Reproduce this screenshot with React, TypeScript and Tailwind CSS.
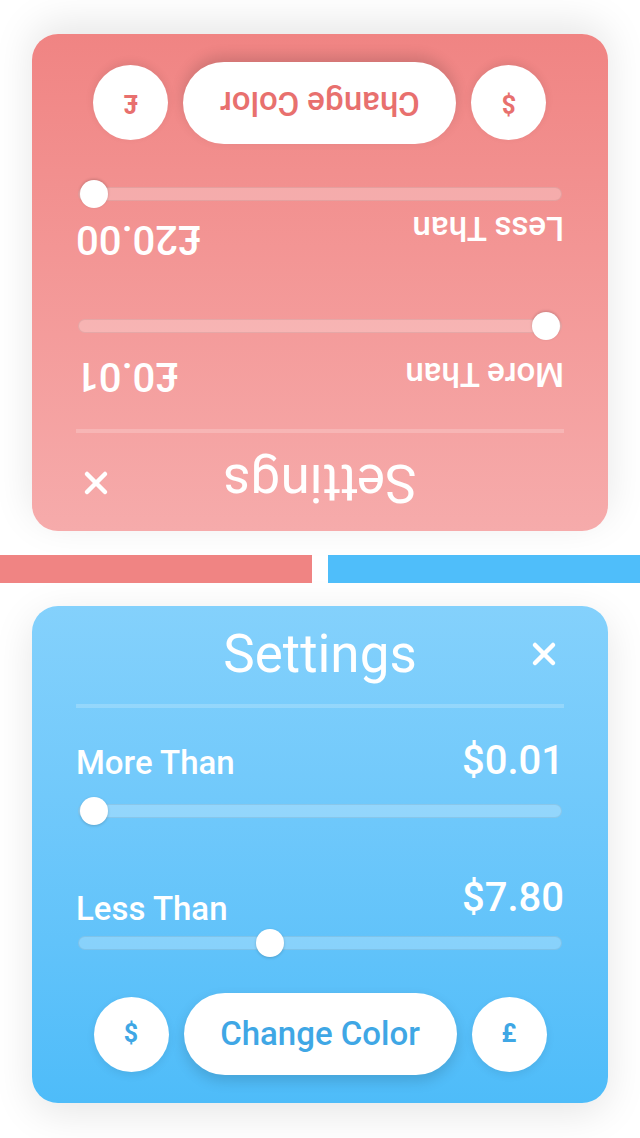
import { X } from 'lucide-react'

type Theme = 'red' | 'blue'

interface PanelProps {
  theme: Theme
  symbol: string
  min: string
  max: string
  maxPos: number
}

// ── Slider (display only) ─────────────────────────
function Slider({ pos }: { pos: number }) {
  return (
    <div className="relative h-[28px] mx-[2px]">
      <div className="absolute left-0 right-0 top-[7px] h-[14px] rounded-full bg-white/25 border border-black/[0.07]" />
      <div
        className="absolute top-0 w-[28px] h-[28px] rounded-full bg-white shadow-[0_1px_3px_rgba(0,0,0,0.18)]"
        style={{ left: `calc(${pos} * (100% - 32px) + 2px)` }}
      />
    </div>
  )
}

// ── Settings panel ────────────────────────────────
function Panel({ theme, symbol, min, max, maxPos }: PanelProps) {
  const red = theme === 'red'
  const accent = red ? 'text-[#e8706e]' : 'text-[#3fa7e5]'

  return (
    <div
      className={
        'w-[576px] h-[497px] mx-auto rounded-[26px] px-[44px] flex flex-col text-white shadow-[0_10px_40px_rgba(0,0,0,0.10)] ' +
        (red
          ? 'bg-gradient-to-b from-[#f6abab] to-[#f08483] rotate-180'
          : 'bg-gradient-to-b from-[#84d1fc] to-[#4ebcf9]')
      }
    >
      {/* header */}
      <div className="relative mt-[23px] h-[50px] flex items-center justify-center">
        <h1 className="text-[53px] leading-none font-normal">Settings</h1>
        <X size={36} strokeWidth={3} className="absolute right-[2px] top-[7px]" />
      </div>
      <div className="mt-[25px] h-[4px] bg-white/20" />

      {/* more than */}
      <div className="mt-[33px] flex items-baseline justify-between">
        <span className="text-[33px] leading-none font-medium">More Than</span>
        <span className="text-[40px] leading-none font-medium">{symbol}{min}</span>
      </div>
      <div className="mt-[16px]">
        <Slider pos={0} />
      </div>

      {/* less than */}
      <div className="mt-[53px] flex items-end justify-between">
        <span className="text-[33px] leading-none font-medium">Less Than</span>
        <span className="text-[40px] leading-none font-medium mb-[7px]">{symbol}{max}</span>
      </div>
      <div className="mt-[4px]">
        <Slider pos={maxPos} />
      </div>

      {/* buttons */}
      <div className="mt-[36px] h-[82px] flex items-center justify-center gap-[15px]">
        <div className={'w-[75px] h-[75px] rounded-full bg-white flex items-center justify-center text-[25px] font-bold shadow-[0_3px_8px_rgba(0,0,0,0.08)] ' + accent}>
          $
        </div>
        <div className={'w-[273px] h-[82px] rounded-full bg-white flex items-center justify-center text-[33px] font-medium shadow-[0_6px_14px_rgba(0,0,0,0.14)] ' + accent}>
          Change Color
        </div>
        <div className={'w-[75px] h-[75px] rounded-full bg-white flex items-center justify-center text-[25px] font-bold shadow-[0_3px_8px_rgba(0,0,0,0.08)] ' + accent}>
          £
        </div>
      </div>
    </div>
  )
}

// ── Main ─────────────────────────────────────────
export default function App() {
  return (
    <div className="w-[640px] h-[1138px] bg-white pt-[34px] overflow-hidden" style={{ fontFamily: 'Roboto, "Liberation Sans", sans-serif' }}>
      <Panel theme="red" symbol="£" min="0.01" max="20.00" maxPos={1} />

      <div className="mt-[24px] flex gap-[16px]">
        <div className="flex-1 h-[28px] bg-[#f08483]" />
        <div className="flex-1 h-[28px] bg-[#4fbefa]" />
      </div>

      <div className="mt-[23px]">
        <Panel theme="blue" symbol="$" min="0.01" max="7.80" maxPos={0.39} />
      </div>
    </div>
  )
}
